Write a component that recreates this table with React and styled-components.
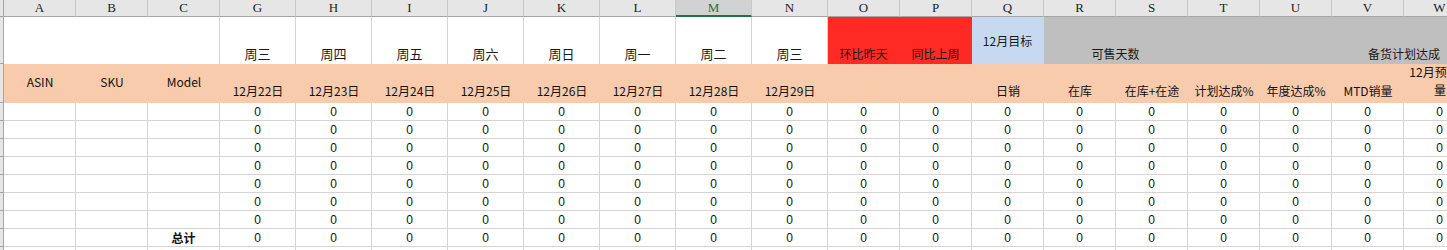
import React from 'react';
import styled, { createGlobalStyle } from 'styled-components';

const GlobalStyle = createGlobalStyle`
  html, body { margin: 0; padding: 0; background: #fff; }
  body { overflow: hidden; }
`;

const Sheet = styled.div`
  width: 1447px;
  height: 250px;
  overflow: hidden;
  font-family: "Noto Sans CJK SC", "Liberation Sans", sans-serif;
  color: #111;
`;

const Row = styled.div`
  display: flex;
  width: max-content;
  height: ${(p) => p.$h}px;
`;

const RowHead = styled.div`
  flex: none;
  width: 4px;
  box-sizing: border-box;
  background: #e6e6e6;
  border-right: 1px solid #a6a6a6;
  border-bottom: 1px solid #a6a6a6;
`;

const ColHead = styled.div`
  flex: none;
  width: ${(p) => p.$w}px;
  box-sizing: border-box;
  background: ${(p) => (p.$sel ? '#d2d2d2' : '#e6e6e6')};
  border-right: 1px solid #c9c9c9;
  border-bottom: ${(p) => (p.$sel ? '2px solid #217346' : '1px solid #a6a6a6')};
  color: ${(p) => (p.$sel ? '#217346' : '#222')};
  font-family: "Liberation Serif", serif;
  font-size: 13px;
  display: flex;
  align-items: center;
  justify-content: center;
  padding-top: ${(p) => (p.$sel ? 1 : 0)}px;
`;

const TitleCell = styled.div`
  flex: none;
  width: ${(p) => p.$w}px;
  box-sizing: border-box;
  background: ${(p) => p.$bg || '#fff'};
  border-right: 1px solid ${(p) => (p.$line ? '#d4d4d4' : p.$bg || '#fff')};
  display: flex;
  align-items: ${(p) => (p.$middle ? 'center' : 'flex-end')};
  justify-content: ${(p) => (p.$right ? 'flex-end' : 'center')};
  padding-bottom: ${(p) => (p.$middle ? 0 : 2)}px;
  padding-right: ${(p) => p.$pr || 0}px;
  font-size: ${(p) => (p.$day ? 13 : 12)}px;
  line-height: 16px;
  white-space: nowrap;
  color: #1a1a1a;
`;

const LabelCell = styled.div`
  flex: none;
  width: ${(p) => p.$w}px;
  box-sizing: border-box;
  background: #f8cbad;
  display: flex;
  align-items: ${(p) => (p.$middle ? 'center' : 'flex-end')};
  justify-content: center;
  text-align: center;
  padding: 0 4px ${(p) => (p.$middle ? 3 : 4)}px;
  font-size: 12px;
  line-height: ${(p) => (p.$wrap ? 18 : 16)}px;
  white-space: ${(p) => (p.$wrap ? 'normal' : 'nowrap')};
  word-break: break-all;
  color: #111;
`;

const DataCell = styled.div`
  flex: none;
  width: ${(p) => p.$w}px;
  box-sizing: border-box;
  border-right: 1px solid #d4d4d4;
  border-bottom: 1px solid #d4d4d4;
  display: flex;
  align-items: center;
  justify-content: center;
  font-family: ${(p) => (p.$bold ? '"Noto Sans CJK SC", sans-serif' : '"Liberation Sans", sans-serif')};
  font-weight: ${(p) => (p.$bold ? 700 : 400)};
  font-size: 12px;
  color: #111;
`;

const columns = [
  { k: 'A', w: 72 },
  { k: 'B', w: 72 },
  { k: 'C', w: 72 },
  { k: 'G', w: 76 },
  { k: 'H', w: 76 },
  { k: 'I', w: 76 },
  { k: 'J', w: 76 },
  { k: 'K', w: 76 },
  { k: 'L', w: 76 },
  { k: 'M', w: 76, sel: true },
  { k: 'N', w: 76 },
  { k: 'O', w: 72 },
  { k: 'P', w: 72 },
  { k: 'Q', w: 72 },
  { k: 'R', w: 72 },
  { k: 'S', w: 72 },
  { k: 'T', w: 72 },
  { k: 'U', w: 72 },
  { k: 'V', w: 72 },
  { k: 'W', w: 72 },
];

const days = ['周三', '周四', '周五', '周六', '周日', '周一', '周二', '周三'];
const dates = ['12月22日', '12月23日', '12月24日', '12月25日', '12月26日', '12月27日', '12月28日', '12月29日'];
const metrics = ['日销', '在库', '在库+在途', '计划达成%', '年度达成%', 'MTD销量'];

const RED = '#ff2a23';
const BLUE = '#c6d9f0';
const GRAY = '#bfbfbf';

export default function App() {
  return (
    <>
      <GlobalStyle />
      <Sheet>
        <Row $h={17}>
          <RowHead />
          {columns.map((c) => (
            <ColHead key={c.k} $w={c.w} $sel={c.sel}>
              {c.k}
            </ColHead>
          ))}
        </Row>

        <Row $h={47}>
          <RowHead />
          <TitleCell $w={216} $line />
          {days.map((d, i) => (
            <TitleCell key={i} $w={76} $line $day>
              {d}
            </TitleCell>
          ))}
          <TitleCell $w={72} $bg={RED}>环比昨天</TitleCell>
          <TitleCell $w={72} $bg={RED}>同比上周</TitleCell>
          <TitleCell $w={72} $bg={BLUE} $middle>12月目标</TitleCell>
          <TitleCell $w={144} $bg={GRAY}>可售天数</TitleCell>
          <TitleCell $w={288} $bg={GRAY} $right $pr={35}>备货计划达成</TitleCell>
        </Row>

        <Row $h={39}>
          <RowHead />
          <LabelCell $w={72} $middle>ASIN</LabelCell>
          <LabelCell $w={72} $middle>SKU</LabelCell>
          <LabelCell $w={72} $middle>Model</LabelCell>
          {dates.map((d) => (
            <LabelCell key={d} $w={76}>{d}</LabelCell>
          ))}
          <LabelCell $w={72} />
          <LabelCell $w={72} />
          {metrics.map((m) => (
            <LabelCell key={m} $w={72}>{m}</LabelCell>
          ))}
          <LabelCell $w={72} $wrap>12月预计销量</LabelCell>
        </Row>

        {Array.from({ length: 9 }).map((_, r) => (
          <Row key={r} $h={18}>
            <RowHead />
            {columns.map((c, ci) => (
              <DataCell key={c.k} $w={c.w} $bold={r === 7 && ci === 2}>
                {r < 8 ? (ci < 3 ? (r === 7 && ci === 2 ? '总计' : '') : '0') : ''}
              </DataCell>
            ))}
          </Row>
        ))}
      </Sheet>
    </>
  );
}
